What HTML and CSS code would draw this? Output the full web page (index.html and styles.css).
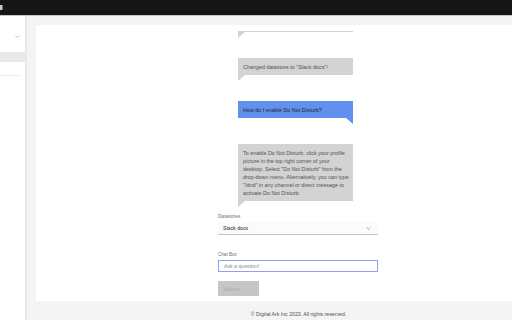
FILE: index.html
```html
<!DOCTYPE html>
<html lang="en">
<head>
    <meta charset="UTF-8">
    <meta name="viewport" content="width=device-width,initial-scale=1">
    <title>Digital Ark Chat</title>
    <link rel="stylesheet" href="styles.css">
</head>
<body>
    <header class="topbar">
        <span class="brand-mark"></span>
    </header>
    <div class="shell">
        <aside class="sidenav">
            <div class="nav-menu">
                <svg class="nav-chevron" width="5" height="3" viewBox="0 0 5 3"><path d="M0.5 0.5 L2.5 2.5 L4.5 0.5" fill="none" stroke="#a8a8a8" stroke-width="0.7"/></svg>
            </div>
            <div class="nav-item active"></div>
            <div class="nav-divider"></div>
        </aside>
        <main class="main">
            <div class="panel">
                <div class="chat">
                    <div class="messages">
                        <div class="bubble bot"></div>
                        <div class="bubble bot">Changed datastore to "Slack docs"!</div>
                        <div class="bubble user">How do I enable Do Not Disturb?</div>
                        <div class="bubble bot">To enable Do Not Disturb, click your profile picture in the top right corner of your desktop. Select "Do Not Disturb" from the drop-down menu. Alternatively, you can type "/dnd" in any channel or direct message to activate Do Not Disturb.</div>
                    </div>
                    <div class="field">
                        <div class="label">Datastores</div>
                        <div class="select">
                            <span>Slack docs</span>
                            <svg width="5" height="3" viewBox="0 0 5 3"><path d="M0.5 0.5 L2.5 2.5 L4.5 0.5" fill="none" stroke="#6f6f6f" stroke-width="0.6"/></svg>
                        </div>
                    </div>
                    <div class="field chatbox">
                        <div class="label">Chat Box</div>
                        <div class="input">Ask a question!</div>
                    </div>
                    <button class="submit" disabled>Submit</button>
                </div>
            </div>
            <footer class="footer">© Digital Ark Inc 2023. All rights reserved.</footer>
        </main>
    </div>
</body>
</html>
```

FILE: styles.css
```css
html, body {
    margin: 0;
    height: 320px;
    overflow: hidden;
}
body {
    font-family: "Liberation Sans", Arial, sans-serif;
    background: #f4f4f4;
    color: #161616;
}
.topbar {
    height: 15px;
    background: #161616;
    border-bottom: 1px solid #c6c6c6;
    display: flex;
    align-items: center;
}
.brand-mark {
    width: 3px;
    height: 5px;
    background: #c6c6c6;
    border-right: 1px solid #6f6f6f;
    box-sizing: border-box;
}
.shell {
    display: flex;
    height: 304px;
}
.sidenav {
    width: 25px;
    background: #fff;
    border-right: 2px solid #e8e8e8;
    flex-shrink: 0;
}
.nav-menu {
    height: 36px;
    box-sizing: border-box;
    padding: 4px 5px 0 0;
    display: flex;
    justify-content: flex-end;
    align-items: center;
}
.nav-item {
    height: 10px;
    background: #e8e8e8;
}
.nav-divider {
    height: 1px;
    width: 20px;
    background: #ececec;
    margin-top: 13px;
}
.main {
    flex: 1;
    display: flex;
    flex-direction: column;
    padding: 9px 0 0 9px;
    min-width: 0;
}
.panel {
    background: #fff;
    height: 276px;
    padding-top: 6px;
    box-sizing: border-box;
}
.chat {
    width: 160px;
    margin-left: 182px;
}
.messages {
    height: 183px;
    overflow: hidden;
    display: flex;
    flex-direction: column;
    justify-content: flex-end;
    padding-bottom: 13px;
    box-sizing: border-box;
}
.bubble {
    position: relative;
    width: 115px;
    min-height: 17px;
    box-sizing: border-box;
    margin-left: 20px;
    padding: 5px 2px 4px 5px;
    font-size: 5.4px;
    line-height: 8px;
    flex-shrink: 0;
}
.bubble + .bubble {
    margin-top: 26px;
}
.bubble.bot {
    background: #d3d3d3;
    color: #525252;
}
.bubble.user {
    background: #6190ee;
    color: #262626;
}
.bubble::after {
    content: '';
    position: absolute;
    top: 100%;
    border-top: 6px solid #d3d3d3;
}
.bubble.bot::after {
    left: 0;
    border-right: 7px solid transparent;
}
.bubble.user::after {
    right: 0;
    border-top-color: #6190ee;
    border-left: 7px solid transparent;
}
.label {
    font-size: 4.6px;
    line-height: 5px;
    color: #6f6f6f;
    margin-bottom: 3px;
}
.select {
    height: 13px;
    background: #fbfbfb;
    border-bottom: 1px solid #c6c6c6;
    box-sizing: border-box;
    display: flex;
    align-items: center;
    justify-content: space-between;
    padding: 0 7px 0 5px;
    font-size: 5.2px;
    color: #262626;
}
.chatbox {
    margin-top: 17px;
}
.input {
    height: 12px;
    border: 1px solid #8e9ef4;
    box-sizing: border-box;
    padding-left: 5px;
    display: flex;
    align-items: center;
    font-size: 5.2px;
    color: #8d8d8d;
}
.submit {
    margin-top: 9px;
    width: 41px;
    height: 15px;
    border: none;
    background: #c6c6c6;
    color: #a8a8a8;
    font-family: inherit;
    font-size: 5.2px;
    text-align: left;
    padding: 0 5px;
}
.footer {
    height: 19px;
    padding: 10px 0 0 49px;
    box-sizing: border-box;
    text-align: center;
    font-size: 5.2px;
    color: #525252;
}
```
